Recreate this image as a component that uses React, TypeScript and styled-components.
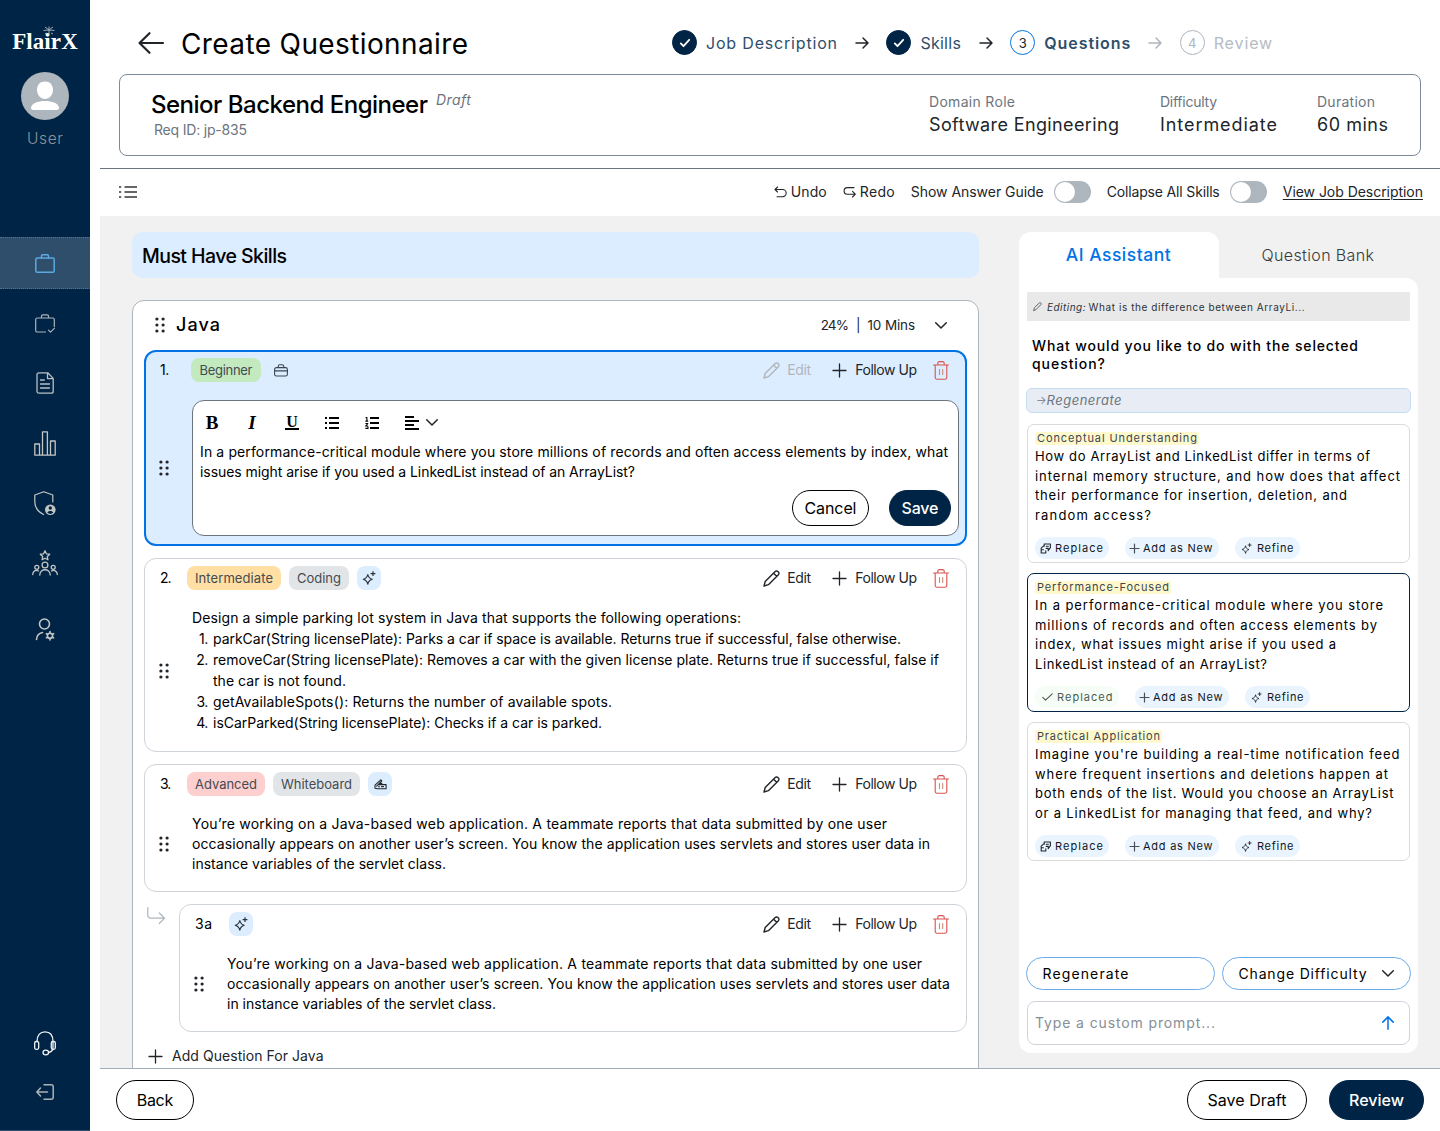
import React from "react";
import styled, { createGlobalStyle, css } from "styled-components";

const navy = "#002445";
const blue = "#0073e6";
const sky = "#dcedff";
const ink = "#212529";
const muted = "#6c757d";
const silver = "#adb5bd";

const GlobalStyle = createGlobalStyle`
  * { box-sizing: border-box; }
  body { margin: 0; background: #fff; font-family: Inter, "Open Sans", sans-serif; color: #000; }
  button { font-family: inherit; cursor: pointer; }
`;

/* ---------- text ---------- */

interface TextProps {
  $size?: number;
  $weight?: number;
  $track?: number;
  $color?: string;
  $line?: number;
  $italic?: boolean;
}

const Text = styled.span<TextProps>`
  display: block;
  flex: none;
  white-space: pre;
  font-size: ${(p) => p.$size ?? 14}px;
  font-weight: ${(p) => p.$weight ?? 400};
  letter-spacing: ${(p) => p.$track ?? 0}px;
  margin-right: ${(p) => -(p.$track ?? 0)}px;
  line-height: ${(p) => p.$line ?? 20}px;
  color: ${(p) => p.$color ?? "inherit"};
  font-style: ${(p) => (p.$italic ? "italic" : "normal")};
`;

/* ---------- icons ---------- */

interface IconProps {
  w: number;
  h: number;
  sw?: number;
  color?: string;
  children: React.ReactNode;
}

const Svg = styled.svg`
  display: block;
  flex: none;
  overflow: visible;
`;

const Icon = ({ w, h, sw = 1.2, color = "currentColor", children }: IconProps) => (
  <Svg
    width={w}
    height={h}
    viewBox={`0 0 ${w} ${h}`}
    fill="none"
    stroke={color}
    strokeWidth={sw}
    strokeLinecap="round"
    strokeLinejoin="round"
  >
    {children}
  </Svg>
);

const BackArrow = () => (
  <Icon w={26} h={22} sw={2.2} color={ink}>
    <path d="M25 11H1.5M11.5 1.2L1.5 11l10 9.8" />
  </Icon>
);
const StepArrow = ({ color }: { color: string }) => (
  <Icon w={14} h={12} sw={1.5} color={color}>
    <path d="M1 6h12M8 1l5 5-5 5" />
  </Icon>
);
const Check = ({ w = 10, sw = 1.8 }: { w?: number; sw?: number }) => (
  <Icon w={w} h={8} sw={sw}>
    <path d={`M.8 4.4l2.7 2.8L${w - 0.8} .8`} />
  </Icon>
);
const OutlineList = () => (
  <Icon w={18} h={12} sw={2} color="#666">
    <path d="M5.500 1H18M5.500 6H18M5.500 11H18M0 1h2.200M0 6h2.200M0 11h2.200" strokeLinecap="butt" />
  </Icon>
);
const Undo = () => (
  <Icon w={13} h={12} sw={1.1}>
    <path d="M3.6 1L1 3.5 3.6 6M1 3.5h7.6a3.6 3.6 0 0 1 0 7.2H3" />
  </Icon>
);
const Redo = () => (
  <Icon w={13} h={12} sw={1.1}>
    <path d="M11 1.6H4.400a3.300 3.300 0 0 0 0 6.600H12.300M9.500 5.400L12.300 8.200l-2.800 2.800" />
  </Icon>
);
const Chevron = () => (
  <Icon w={12} h={7} sw={1.5} color={ink}>
    <path d="M.7.7L6 6 11.3.7" />
  </Icon>
);
const Plus = ({ s = 13, sw = 1.3, color = ink }: { s?: number; sw?: number; color?: string }) => (
  <Icon w={s} h={s} sw={sw} color={color}>
    <path d={`M${s / 2} 0v${s}M0 ${s / 2}h${s}`} />
  </Icon>
);
const Pencil = () => (
  <Icon w={17} h={17} sw={1.4}>
    <path d="M1 16l1.200-4.500L12.200 1.500a1.900 1.900 0 0 1 2.700 0l.5.5a1.900 1.900 0 0 1 0 2.700L5.400 14.700zM10.600 3.200l3.100 3.100" />
  </Icon>
);
const TinyPencil = () => (
  <Icon w={9} h={9} sw={0.9} color="#555">
    <path d="M.7 8.3l.7-2.6L6.4.9c.9-.8 2.4.6 1.6 1.6L3.1 7.5z" />
  </Icon>
);
const Trash = () => (
  <Icon w={16} h={19} sw={1.1} color="#d9534f">
    <path d="M.5 4h15M2.2 4v12.600c0 1 .6 1.600 1.600 1.600h8.400c1 0 1.600-.6 1.600-1.600V4M4.800 4V2.200C4.800 1.200 5.400.6 6.400.6h3.200c1 0 1.600.6 1.600 1.600V4" />
    <path d="M6.500 8.500v5M9.700 8.500v5" stroke="#c58a78" />
  </Icon>
);
const Toolbox = () => (
  <Icon w={14} h={13} sw={1.1} color="#3c4650">
    <rect x=".6" y="3.600" width="12.800" height="8.400" rx="1.800" />
    <path d="M4.200 3.600V2.400A1.600 1.600 0 0 1 5.800.8h2.400a1.600 1.600 0 0 1 1.600 1.600v1.200M.6 6.900h12.800" />
  </Icon>
);
const Sparkle = ({ s = 14 }: { s?: number }) => (
  <Svg width={s} height={s} viewBox="0 0 14 14" fill="none" stroke="#2a323a" strokeWidth="1.2" strokeLinejoin="round">
    <path d="M5.800 3.500C6.300 6.400 7.100 7.300 10.200 8.300 7.100 9.300 6.300 10.200 5.800 13.200 5.200 10.200 4.400 9.300 1.300 8.300 4.400 7.300 5.200 6.400 5.800 3.500Z" />
    <path d="M11 .2v4.800M8.600 2.600h4.800" />
  </Svg>
);
const WritingHand = () => (
  <Icon w={13} h={11} sw={1.1} color="#20262c">
    <path d="M1 6.200L6.800.9l1 .9-3.600 3.800h7.900v4.200H3.400L1 9.300zM4.200 5.600L2.600 7.200M6.400 3.400l2.400 2.200M7.500 7.600h2M4.500 7.700h1" />
  </Icon>
);
const Swap = () => (
  <Icon w={11} h={11} sw={1.1} color="#20262c">
    <path d="M4.200 3.200V1h6.200v3.700L8.200 7.600V5.400H6.200M6.300 3.200H8.400M3.400 3.200L1.200 5.200v1.600h2.200M1.200 6.800v3.200h4.600V7.800M1.200 10h4.600" />
  </Icon>
);
const ReturnArrow = () => (
  <Icon w={19} h={18} sw={1.2} color={silver}>
    <path d="M.8.6v7.600a3 3 0 0 0 3 3H17.500M12.300 6l5.300 5.200-5.300 5.300" />
  </Icon>
);
const Drag = () => (
  <Svg width={10} height={16} viewBox="0 0 10 16" fill={ink}>
    {[2, 8, 14].map((y) => (
      <React.Fragment key={y}>
        <circle cx="1.900" cy={y} r="1.600" />
        <circle cx="8.100" cy={y} r="1.600" />
      </React.Fragment>
    ))}
  </Svg>
);
const Bullets = () => (
  <Icon w={14} h={12} sw={2} color="#000">
    <path d="M4 1h10M4 6h10M4 11h10M0 1h2M0 6h2M0 11h2" strokeLinecap="butt" />
  </Icon>
);
const Numbered = () => (
  <Icon w={14} h={12} sw={2} color="#000">
    <path d="M5 1h9M5 6h9M5 11h9" strokeLinecap="butt" />
    <path d="M.6.6h1.300v3.400M.4 4.100h2.800M.4 6.500h2.500L.6 9h2.500M.4 11.400h2.600V9.600" strokeWidth="1.1" strokeLinecap="butt" />
  </Icon>
);
const AlignLeft = () => (
  <Icon w={14} h={14} sw={2} color="#000">
    <path d="M0 1h9M0 5h14M0 9h9M0 13h14" strokeLinecap="butt" />
  </Icon>
);
const SendUp = () => (
  <Icon w={12} h={14} sw={1.5} color={blue}>
    <path d="M6 13.300V1M.8 6.100L6 .9l5.200 5.200" />
  </Icon>
);

const CaseIcon = () => (
  <Icon w={20} h={19} sw={1.5} color="#5aa9e0">
    <rect x=".8" y="4" width="18.400" height="14.200" rx="1.500" />
    <path d="M6.500 4V2c0-.7.500-1.200 1.200-1.200h4.600c.7 0 1.200.5 1.200 1.200v2" />
  </Icon>
);
const CaseCheckIcon = () => (
  <Icon w={20} h={19} sw={1.200} color="#a9b3bb">
    <path d="M10.500 18H2.200C1.300 18 .7 17.400.7 16.500v-11C.7 4.600 1.300 4 2.200 4h15.600c.9 0 1.500.6 1.500 1.500v7M6.500 4V2c0-.7.500-1.200 1.200-1.200h4.600c.7 0 1.200.5 1.200 1.200v2M13.500 16.200l2 2 4-4" />
  </Icon>
);
const DocIcon = () => (
  <Icon w={18} h={22} sw={1.300} color="#b9bfc2">
    <path d="M3 .8h8.800l5.400 5.600v12.800c0 1.100-.8 2-2 2H3c-1.200 0-2-.9-2-2V2.800c0-1.100.8-2 2-2zM11.500 1v5.600H17M4.500 8h3.800M4.500 12h9M4.500 16h9" />
  </Icon>
);
const ChartIcon = () => (
  <Icon w={22} h={25} sw={1.300} color="#c4c6c4">
    <path d="M.8 24.200V13h4.700v11.200M8.500 24.200V.8h4.900v23.400M16.500 24.200V10h4.700v14.200zM.8 24.200h20.400" />
  </Icon>
);
const ShieldIcon = () => (
  <Icon w={22} h={25} sw={1.200} color="#c4c6c4">
    <path d="M9.500 23.500C3.500 20.500.8 16.500.8 11V4L9.800.8 18.800 4v7" />
    <circle cx="16.300" cy="18.700" r="5.300" fill="#c4c6c4" stroke="none" />
    <circle cx="16.300" cy="17" r="1.700" fill={navy} stroke="none" />
    <path d="M13.300 21.600c.6-2.200 5.400-2.200 6 0-1.600 1.700-4.400 1.700-6 0z" fill={navy} stroke="none" />
  </Icon>
);
const TeamIcon = () => (
  <Icon w={26} h={26} sw={1.300} color="#c4c6c4">
    <path d="M13 .8l1.400 3 3.300.4-2.400 2.300.6 3.300-2.900-1.600-2.900 1.600.6-3.300-2.400-2.300 3.300-.4z" />
    <circle cx="13" cy="15" r="2.900" />
    <circle cx="4.800" cy="17.300" r="2" />
    <circle cx="21.200" cy="17.300" r="2" />
    <path d="M7.800 25c.2-7 10.200-7 10.400 0M.7 24.500c0-3.800 3.300-4.800 5.800-3.500M25.300 24.500c0-3.800-3.300-4.800-5.800-3.500" />
  </Icon>
);
const UserGearIcon = () => (
  <Icon w={20} h={23} sw={1.600} color="#c4c6c4">
    <circle cx="9.500" cy="6" r="5" />
    <path d="M1.500 21.500c.3-4 2.500-6.400 6-7" />
    <circle cx="15" cy="17.800" r="2.600" />
    <path d="M15 13.600v1.400M15 20.600V22M11.400 15.700l1.200.7M17.400 19.200l1.200.7M18.600 15.700l-1.200.7M12.600 19.200l-1.200.7" />
  </Icon>
);
const HeadsetIcon = () => (
  <Icon w={22} h={25} sw={1.300} color="#f1f3f5">
    <path d="M3 10.500C3 4.500 6 .8 11 .8s8 3.700 8 9.700v6c0 2.500-2 4.500-4.500 5" />
    <rect x=".7" y="10.500" width="4" height="7.800" rx="1.500" />
    <rect x="17.300" y="10.500" width="4" height="7.800" rx="1.500" />
    <ellipse cx="11.800" cy="21.500" rx="2.800" ry="2.300" />
  </Icon>
);
const ExitIcon = () => (
  <Icon w={18} h={16} sw={1.500} color="#aab3b5">
    <path d="M8 .8h7.200c1.200 0 2 .8 2 2v10.400c0 1.200-.8 2-2 2H8M11.500 8H1M4.500 4L.8 8l3.700 4" />
  </Icon>
);

/* ---------- sidebar ---------- */

const Page = styled.div`
  display: flex;
  width: 1440px;
  height: 1131px;
  overflow: hidden;
  background: #fff;
`;

const Sidebar = styled.aside`
  width: 90px;
  flex: none;
  display: flex;
  flex-direction: column;
  align-items: center;
  padding-top: 25px;
  background: ${navy};
  border-bottom: 1px solid #2f4e6b;
`;

const Logo = styled.div`
  position: relative;
  height: 47px;
  padding-top: 3px;
  font-family: "Liberation Serif", serif;
  font-size: 23px;
  font-weight: 700;
  letter-spacing: 0.1px;
  line-height: 28px;
  color: #fff;
`;

const Burst = styled.svg`
  position: absolute;
  left: 31px;
  top: 1px;
`;

const Avatar = styled.div`
  width: 48px;
  height: 48px;
  flex: none;
  border-radius: 50%;
  background: ${silver};
  overflow: hidden;
  margin-bottom: 9px;
`;

const Nav = styled.nav`
  width: 100%;
  margin-top: 84px;
  display: flex;
  flex-direction: column;
`;

const NavItem = styled.a<{ $active?: boolean; $drop?: number }>`
  height: ${(p) => (p.$active ? 52 : 60)}px;
  margin: ${(p) => (p.$active ? "4px 0" : `${p.$drop ?? 0}px 0 0`)};
  display: flex;
  align-items: center;
  justify-content: center;
  ${(p) =>
    p.$active &&
    css`
      background: #2f4e6b;
      border-top: 1px dotted #56708a;
      border-bottom: 1px dotted #56708a;
    `}
`;

const SidebarFoot = styled.div`
  margin-top: auto;
  padding-bottom: 30px;
  display: flex;
  flex-direction: column;
  align-items: center;
  gap: 28px;
`;

/* ---------- header ---------- */

const Main = styled.main`
  flex: 1;
  min-width: 0;
  padding-left: 10px;
  display: flex;
  flex-direction: column;
`;

const Header = styled.header`
  height: 169px;
  flex: none;
  padding: 12px 19px 0;
  border-bottom: 1px solid #6c757d;
`;

const TitleRow = styled.div`
  height: 62px;
  display: flex;
  align-items: center;
  padding: 0 0 1px 19px;
`;

const PageTitle = styled.div`
  width: 491px;
  margin-left: 17px;
  padding-top: 3px;
`;

const Stepper = styled.div`
  display: flex;
  align-items: center;
  gap: 17.7px;
`;

const Step = styled.div`
  display: flex;
  align-items: center;
  gap: 9px;
`;

const StepDot = styled.span<{ $state: "done" | "current" | "next" }>`
  width: 25px;
  height: 25px;
  border-radius: 50%;
  display: flex;
  align-items: center;
  justify-content: center;
  font-size: 13px;
  color: ${(p) => (p.$state === "done" ? "#fff" : p.$state === "current" ? ink : silver)};
  background: ${(p) => (p.$state === "done" ? navy : "#fff")};
  border: 1px solid ${(p) => (p.$state === "done" ? navy : p.$state === "current" ? blue : silver)};
`;

const JobCard = styled.section`
  height: 82px;
  border: 1px solid #7b8a9b;
  border-radius: 8px;
  display: flex;
  padding: 15px 32px 0 31px;
`;

const JobTitle = styled.div`
  flex: 1;
`;

const JobTitleRow = styled.div`
  display: flex;
  gap: 8px;
`;

const RequestId = styled.div`
  padding: 3px 0 0 3px;
`;

const Meta = styled.dl<{ $w: number }>`
  width: ${(p) => p.$w}px;
  margin: 2px 0 0;
`;

/* ---------- toolbar ---------- */

const Toolbar = styled.div`
  height: 47px;
  flex: none;
  padding: 0 17px 2px 19px;
  display: flex;
  align-items: center;
  justify-content: space-between;
`;

const Tools = styled.div`
  display: flex;
  align-items: center;
  gap: 16px;
`;

const Tool = styled.div<{ $gap: number }>`
  display: flex;
  align-items: center;
  gap: ${(p) => p.$gap}px;
  color: ${ink};
`;

const Switch = styled.span`
  width: 37px;
  height: 22px;
  border-radius: 11px;
  background: ${silver};
  padding: 1px;
  &::before {
    content: "";
    display: block;
    width: 20px;
    height: 20px;
    border-radius: 50%;
    background: #fff;
  }
`;

const JobLink = styled.a`
  text-decoration: underline;
  text-underline-offset: 2px;
  text-decoration-thickness: 1px;
  color: ${ink};
`;

/* ---------- workspace ---------- */

const Workspace = styled.div`
  flex: 1;
  min-height: 0;
  overflow: hidden;
  background: #f1f1f1;
  padding: 16px 22px 0 32px;
  display: flex;
  gap: 40px;
`;

const Questions = styled.section`
  width: 847px;
  flex: none;
`;

const Banner = styled.div`
  height: 46px;
  border-radius: 10px;
  background: ${sky};
  padding: 1px 10px 0;
  display: flex;
  align-items: center;
  margin-bottom: 22px;
`;

const SkillCard = styled.div`
  height: 800px;
  background: #fff;
  border: 1px solid ${silver};
  border-radius: 12px;
  padding: 0 11px;
`;

const SkillHead = styled.div`
  height: 49px;
  padding: 0 20px 1px 11px;
  display: flex;
  align-items: center;
`;

const SkillName = styled.div`
  flex: 1;
  padding: 0 0 1px 11px;
`;

const SkillStats = styled.div`
  margin-right: 20px;
  padding-bottom: 1px;
  display: flex;
  gap: 7px;
  color: ${ink};
`;

const Card = styled.article<{ $h: number; $active?: boolean; $indent?: number }>`
  height: ${(p) => p.$h}px;
  margin: 0 0 12px ${(p) => p.$indent ?? 0}px;
  border-radius: 12px;
  border: ${(p) => (p.$active ? `2px solid ${blue}` : "1px solid #ced4da")};
  background: ${(p) => (p.$active ? sky : "#fff")};
  padding: ${(p) => (p.$active ? "0 6px 8px 14px" : "1px 15px 0 15px")};
  display: flex;
  flex-direction: column;
`;

const CardHead = styled.div`
  height: 36px;
  flex: none;
  display: flex;
  align-items: center;
`;

const CardNumber = styled.div<{ $w: number }>`
  width: ${(p) => p.$w}px;
`;

const Chips = styled.div`
  flex: 1;
  display: flex;
  align-items: center;
  gap: 8px;
`;

const Chip = styled.span<{ $bg: string; $w: number }>`
  width: ${(p) => p.$w}px;
  height: 24px;
  border-radius: 8px;
  background: ${(p) => p.$bg};
  display: flex;
  align-items: center;
  justify-content: center;
  color: #434b52;
`;

const Actions = styled.div<{ $inset: number }>`
  display: flex;
  align-items: center;
  margin-right: ${(p) => p.$inset}px;
`;

const EditAction = styled.span<{ $off?: boolean }>`
  display: flex;
  align-items: center;
  gap: 7px;
  margin-right: 22px;
  color: ${(p) => (p.$off ? "#b0b6bc" : ink)};
`;

const FollowAction = styled.span`
  display: flex;
  align-items: center;
  gap: 9px;
  margin-right: 16px;
  color: ${ink};
`;

const CardBody = styled.div<{ $top: number }>`
  flex: 1;
  display: flex;
  padding-top: ${(p) => p.$top}px;
`;

const Handle = styled.div<{ $top: number }>`
  width: 33px;
  padding-top: ${(p) => p.$top}px;
  margin-left: -1px;
  flex: none;
`;

const Lines = styled.div`
  flex: 1;
`;

const StepList = styled.ol`
  list-style: none;
  margin: 0;
  padding: 0;
`;

const StepItem = styled.li`
  display: flex;
  gap: 5px;
`;

const Marker = styled.span`
  width: 16px;
  text-align: right;
  font-size: 14px;
  letter-spacing: -0.4px;
  line-height: 21px;
`;

const Editor = styled.div`
  flex: 1;
  height: 136px;
  border: 1px solid ${muted};
  border-radius: 12px;
  background: #fff;
  padding: 0 7px;
  display: flex;
  flex-direction: column;
`;

const FormatBar = styled.div`
  height: 41px;
  flex: none;
  display: flex;
  align-items: center;
  padding-top: 2px;
`;

const FormatSlot = styled.span`
  width: 40px;
  padding-left: 5px;
  display: flex;
  align-items: center;
  gap: 7px;
`;

const FormatLetter = styled.span<{ $italic?: boolean; $under?: boolean }>`
  font-family: "Liberation Serif", serif;
  font-weight: 700;
  font-size: ${(p) => (p.$under ? 16 : 19)}px;
  line-height: ${(p) => (p.$under ? 12 : 18)}px;
  width: 14px;
  text-align: center;
  font-style: ${(p) => (p.$italic ? "italic" : "normal")};
  border-bottom: ${(p) => (p.$under ? "2px solid #000" : "none")};
`;

const EditorFoot = styled.div`
  display: flex;
  justify-content: flex-end;
  gap: 20px;
  padding-top: 8px;
`;

const Button = styled.button<{ $w: number; $h: number; $primary?: boolean }>`
  width: ${(p) => p.$w}px;
  height: ${(p) => p.$h}px;
  padding: 0;
  border-radius: ${(p) => p.$h / 2}px;
  border: 1px solid ${(p) => (p.$primary ? navy : "#000")};
  background: ${(p) => (p.$primary ? navy : "#fff")};
  color: ${(p) => (p.$primary ? "#fff" : "#000")};
  display: flex;
  align-items: center;
  justify-content: center;
`;

const FollowUpRow = styled.div`
  display: flex;
`;

const Branch = styled.div`
  width: 35px;
  padding: 3px 0 0 3px;
`;

const FollowUpCard = styled(Card)`
  flex: 1;
`;

const AddRow = styled.div`
  display: flex;
  align-items: center;
  gap: 10px;
  height: 24px;
  padding-left: 5px;
  color: ${ink};
`;

/* ---------- assistant ---------- */

const Assistant = styled.aside`
  width: 399px;
  flex: none;
`;

const Tabs = styled.div`
  display: flex;
  height: 46px;
`;

const Tab = styled.div<{ $active?: boolean }>`
  flex: 1;
  padding-right: 1px;
  display: flex;
  align-items: center;
  justify-content: center;
  border-radius: 12px 12px 0 0;
  background: ${(p) => (p.$active ? "#fff" : "transparent")};
  color: ${(p) => (p.$active ? blue : "#343a40")};
`;

const Panel = styled.div`
  height: 775px;
  background: #fff;
  border-radius: 0 12px 12px 12px;
  padding: 14px 8px 8px;
  display: flex;
  flex-direction: column;
`;

const EditingBar = styled.div`
  height: 29px;
  background: #e9e9e9;
  border-radius: 1px;
  padding: 0 6px;
  display: flex;
  align-items: center;
  color: #2c3238;
`;

const EditingLabel = styled.div`
  margin: 0 3px 0 5px;
`;

const Prompt = styled.div`
  padding: 16px 5px 15px;
`;

const Choice = styled.div`
  height: 25px;
  margin: 0 -1px 11px;
  padding: 0 0 1px 9px;
  border: 1px solid #c5dcf5;
  border-radius: 6px;
  background: #e8ecf4;
  display: flex;
  align-items: center;
  color: ${muted};
`;

const Suggestion = styled.article<{ $selected?: boolean }>`
  height: 139px;
  margin-bottom: 10px;
  border: 1px solid ${(p) => (p.$selected ? navy : "#d8dadc")};
  border-radius: 7px;
  padding: 7px 7px 0;
`;

const Tag = styled.div`
  width: fit-content;
  background: #fdf9cd;
  border-radius: 2px;
  padding: 0 2px;
  color: #3d4650;
`;

const SuggestionText = styled.div`
  padding-top: 2px;
  height: 82px;
`;

const SuggestionActions = styled.div`
  display: flex;
  gap: 16px;
  margin-top: 10px;
`;

const MiniButton = styled.span<{ $w: number; $pad: number; $gap: number; $done?: boolean }>`
  width: ${(p) => p.$w}px;
  height: 22px;
  border-radius: 11px;
  background: ${(p) => (p.$done ? "#f5fdf6" : "#e9f4ff")};
  color: ${(p) => (p.$done ? "#4b5a52" : "#10161c")};
  padding-left: ${(p) => p.$pad}px;
  display: flex;
  align-items: center;
  gap: ${(p) => p.$gap}px;
`;

const Pills = styled.div`
  display: flex;
  gap: 7px;
  margin: auto -1px 11px;
`;

const Pill = styled.div`
  flex: 1;
  height: 33px;
  border: 1px solid #6aabee;
  border-radius: 17px;
  padding: 0 16px 0 15.5px;
  display: flex;
  align-items: center;
  justify-content: space-between;
`;

const PromptInput = styled.div`
  height: 44px;
  border: 1px solid #ced4da;
  border-radius: 8px;
  padding: 0 15px 0 7px;
  display: flex;
  align-items: center;
  justify-content: space-between;
  color: #868e96;
`;

/* ---------- footer ---------- */

const Footer = styled.footer`
  height: 63px;
  flex: none;
  border-top: 1px solid #a3adb9;
  padding: 11px 16px 0;
  display: flex;
`;

const FooterRight = styled.div`
  margin-left: auto;
  display: flex;
  gap: 22px;
`;

/* ---------- composed parts ---------- */

type TrackedLine = [text: string, track: number];

const CardActions = ({ off, inset }: { off?: boolean; inset: number }) => (
  <Actions $inset={inset}>
    <EditAction $off={off}>
      <Pencil />
      <Text $track={-0.32}>Edit</Text>
    </EditAction>
    <FollowAction>
      <Plus />
      <Text $track={-0.45}>Follow Up</Text>
    </FollowAction>
    <Trash />
  </Actions>
);

const TrackedLines = ({ lines, size = 14, line = 20 }: { lines: TrackedLine[]; size?: number; line?: number }) => (
  <>
    {lines.map(([t, k]) => (
      <Text key={t} $size={size} $track={k} $line={line}>
        {t}
      </Text>
    ))}
  </>
);

interface SuggestionData {
  tag: TrackedLine;
  lines: TrackedLine[];
  replaced?: boolean;
}

const suggestions: SuggestionData[] = [
  {
    tag: ["Conceptual Understanding", 0.897],
    lines: [
      ["How do ArrayList and LinkedList differ in terms of", 0.636],
      ["internal memory structure, and how does that affect", 0.924],
      ["their performance for insertion, deletion, and", 0.819],
      ["random access?", 1.171],
    ],
  },
  {
    tag: ["Performance-Focused", 0.843],
    lines: [
      ["In a performance-critical module where you store", 0.934],
      ["millions of records and often access elements by", 0.885],
      ["index, what issues might arise if you used a", 0.782],
      ["LinkedList instead of an ArrayList?", 0.621],
    ],
    replaced: true,
  },
  {
    tag: ["Practical Application", 0.823],
    lines: [
      ["Imagine you're building a real-time notification feed", 0.923],
      ["where frequent insertions and deletions happen at", 0.914],
      ["both ends of the list. Would you choose an ArrayList", 0.747],
      ["or a LinkedList for managing that feed, and why?", 0.813],
    ],
  },
];

const SuggestionCard = ({ tag, lines, replaced }: SuggestionData) => (
  <Suggestion $selected={replaced}>
    <Tag>
      <Text $size={11} $track={tag[1]} $line={13}>
        {tag[0]}
      </Text>
    </Tag>
    <SuggestionText>
      <TrackedLines lines={lines} size={13} line={19.5} />
    </SuggestionText>
    <SuggestionActions>
      {replaced ? (
        <MiniButton $w={84} $pad={7} $gap={4} $done>
          <Check w={11} sw={1.1} />
          <Text $size={11} $track={1.022}>Replaced</Text>
        </MiniButton>
      ) : (
        <MiniButton $w={74} $pad={5} $gap={4}>
          <Swap />
          <Text $size={11} $track={1.065}>Replace</Text>
        </MiniButton>
      )}
      <MiniButton $w={94} $pad={5} $gap={4}>
        <Plus s={9} sw={1.2} color="#495057" />
        <Text $size={11} $track={0.752}>Add as New</Text>
      </MiniButton>
      <MiniButton $w={65} $pad={6} $gap={5}>
        <Sparkle s={11} />
        <Text $size={11} $track={0.703}>Refine</Text>
      </MiniButton>
    </SuggestionActions>
  </Suggestion>
);

const parkingSteps: TrackedLine[][] = [
  [["parkCar(String licensePlate): Parks a car if space is available. Returns true if successful, false otherwise.", -0.033]],
  [
    ["removeCar(String licensePlate): Removes a car with the given license plate. Returns true if successful, false if", 0.018],
    ["the car is not found.", 0.03],
  ],
  [["getAvailableSpots(): Returns the number of available spots.", 0.141]],
  [["isCarParked(String licensePlate): Checks if a car is parked.", -0.012]],
];

export default function App() {
  return (
    <Page>
      <GlobalStyle />
      <Sidebar>
        <Logo>
          FlairX
          <Burst width="12" height="9" viewBox="0 0 12 9" stroke="#c9cdd0" strokeWidth=".8" fill="none">
            <path d="M6 9V4M6 4L2 1M6 4l4-3M6 4L.5 4.500M6 4l5.500.5M6 3V.5M4 7L2 8M8 7l2 1" />
          </Burst>
        </Logo>
        <Avatar>
          <svg width="48" height="48" viewBox="0 0 48 48" fill="#fff">
            <path d="M24 9.500c5 0 8 3.500 8 8.300S28.800 27 24 27s-8-4.400-8-9.200 3-8.300 8-8.300z" />
            <path d="M10 36c0-9.500 28-9.500 28 0 0 1.300-.9 2-2.200 2H12.200C10.900 38 10 37.300 10 36z" />
          </svg>
        </Avatar>
        <Text $size={15.5} $weight={300} $track={0.6} $color="#8d9499">User</Text>
        <Nav>
          <NavItem $active><CaseIcon /></NavItem>
          <NavItem><CaseCheckIcon /></NavItem>
          <NavItem><DocIcon /></NavItem>
          <NavItem><ChartIcon /></NavItem>
          <NavItem><ShieldIcon /></NavItem>
          <NavItem><TeamIcon /></NavItem>
          <NavItem $drop={6}><UserGearIcon /></NavItem>
        </Nav>
        <SidebarFoot>
          <HeadsetIcon />
          <ExitIcon />
        </SidebarFoot>
      </Sidebar>

      <Main>
        <Header>
          <TitleRow>
            <BackArrow />
            <PageTitle>
              <Text $size={28} $track={0.382} $line={34}>Create Questionnaire</Text>
            </PageTitle>
            <Stepper>
              <Step>
                <StepDot $state="done"><Check /></StepDot>
                <Text $size={16} $track={0.815} $color="#2f4e6b">Job Description</Text>
              </Step>
              <StepArrow color={ink} />
              <Step>
                <StepDot $state="done"><Check /></StepDot>
                <Text $size={16} $track={0.275} $color="#2f4e6b">Skills</Text>
              </Step>
              <StepArrow color={ink} />
              <Step>
                <StepDot $state="current">3</StepDot>
                <Text $size={16} $weight={600} $track={0.928} $color="#2f4e6b">Questions</Text>
              </Step>
              <StepArrow color={silver} />
              <Step>
                <StepDot $state="next">4</StepDot>
                <Text $size={16} $track={0.884} $color="#b6bcc2">Review</Text>
              </Step>
            </Stepper>
          </TitleRow>
          <JobCard>
            <JobTitle>
              <JobTitleRow>
                <Text $size={24} $weight={500} $track={-0.496} $line={30}>Senior Backend Engineer</Text>
                <Text $italic $track={0.45} $color={muted}>Draft</Text>
              </JobTitleRow>
              <RequestId>
                <Text $track={-0.196} $color={muted} $line={14}>Req ID: jp-835</Text>
              </RequestId>
            </JobTitle>
            <Meta $w={231}>
              <Text $track={0.302} $color={muted} $line={19}>Domain Role</Text>
              <Text $size={18} $track={0.369} $color={ink} $line={28}>Software Engineering</Text>
            </Meta>
            <Meta $w={157}>
              <Text $track={-0.255} $color={muted} $line={19}>Difficulty</Text>
              <Text $size={18} $track={0.936} $color={ink} $line={28}>Intermediate</Text>
            </Meta>
            <Meta $w={71}>
              <Text $track={0.263} $color={muted} $line={19}>Duration</Text>
              <Text $size={18} $track={0.526} $color={ink} $line={28}>60 mins</Text>
            </Meta>
          </JobCard>
        </Header>

        <Toolbar>
          <OutlineList />
          <Tools>
            <Tool $gap={4}><Undo /><Text $track={0.115}>Undo</Text></Tool>
            <Tool $gap={4}><Redo /><Text $track={0.354}>Redo</Text></Tool>
            <Tool $gap={10}><Text $track={-0.034}>Show Answer Guide</Text><Switch /></Tool>
            <Tool $gap={10}><Text $track={-0.163}>Collapse All Skills</Text><Switch /></Tool>
            <JobLink><Text $track={-0.04}>View Job Description</Text></JobLink>
          </Tools>
        </Toolbar>

        <Workspace>
          <Questions>
            <Banner>
              <Text $size={19.5} $weight={500} $track={-0.56} $line={26}>Must Have Skills</Text>
            </Banner>
            <SkillCard>
              <SkillHead>
                <Drag />
                <SkillName>
                  <Text $size={18} $weight={500} $track={1.083}>Java</Text>
                </SkillName>
                <SkillStats>
                  <Text $size={13.5} $track={-0.8}>24%</Text>
                  <Text $size={13.5}>|</Text>
                  <Text $size={13.5} $track={-0.15}>10 Mins</Text>
                </SkillStats>
                <Chevron />
              </SkillHead>

              <Card $h={196} $active>
                <CardHead>
                  <CardNumber $w={31}><Text $track={-0.5}>1.</Text></CardNumber>
                  <Chips>
                    <Chip $bg="#c3eabf" $w={70}><Text $size={13} $track={-0.292}>Beginner</Text></Chip>
                    <Chip $bg="transparent" $w={24}><Toolbox /></Chip>
                  </Chips>
                  <CardActions off inset={10} />
                </CardHead>
                <CardBody $top={12}>
                  <Handle $top={60}><Drag /></Handle>
                  <Editor>
                    <FormatBar>
                      <FormatSlot><FormatLetter>B</FormatLetter></FormatSlot>
                      <FormatSlot><FormatLetter $italic>I</FormatLetter></FormatSlot>
                      <FormatSlot><FormatLetter $under>U</FormatLetter></FormatSlot>
                      <FormatSlot><Bullets /></FormatSlot>
                      <FormatSlot><Numbered /></FormatSlot>
                      <FormatSlot><AlignLeft /><Chevron /></FormatSlot>
                    </FormatBar>
                    <TrackedLines
                      lines={[
                        ["In a performance-critical module where you store millions of records and often access elements by index, what", 0.123],
                        ["issues might arise if you used a LinkedList instead of an ArrayList?", -0.062],
                      ]}
                    />
                    <EditorFoot>
                      <Button $w={77} $h={36}><Text $size={16} $track={-0.094}>Cancel</Text></Button>
                      <Button $w={62} $h={36} $primary><Text $size={16} $weight={500} $track={-0.156}>Save</Text></Button>
                    </EditorFoot>
                  </Editor>
                </CardBody>
              </Card>

              <Card $h={194}>
                <CardHead>
                  <CardNumber $w={27}><Text $track={-1}>2.</Text></CardNumber>
                  <Chips>
                    <Chip $bg="#ffdfa3" $w={94}><Text $size={13} $track={0.085}>Intermediate</Text></Chip>
                    <Chip $bg="#e2e5e8" $w={60}><Text $size={13} $track={-0.013}>Coding</Text></Chip>
                    <Chip $bg={sky} $w={24}><Sparkle /></Chip>
                  </Chips>
                  <CardActions inset={2} />
                </CardHead>
                <CardBody $top={11}>
                  <Handle $top={56}><Drag /></Handle>
                  <Lines>
                    <TrackedLines lines={[["Design a simple parking lot system in Java that supports the following operations:", 0.111]]} line={21} />
                    <StepList>
                      {parkingSteps.map((lines, i) => (
                        <StepItem key={i}>
                          <Marker>{i + 1}.</Marker>
                          <div><TrackedLines lines={lines} line={21} /></div>
                        </StepItem>
                      ))}
                    </StepList>
                  </Lines>
                </CardBody>
              </Card>

              <Card $h={128}>
                <CardHead>
                  <CardNumber $w={27}><Text $track={-1}>3.</Text></CardNumber>
                  <Chips>
                    <Chip $bg="#fdcfcf" $w={78}><Text $size={13} $track={-0.027}>Advanced</Text></Chip>
                    <Chip $bg="#e2e5e8" $w={87}><Text $size={13} $track={-0.019}>Whiteboard</Text></Chip>
                    <Chip $bg={sky} $w={24}><WritingHand /></Chip>
                  </Chips>
                  <CardActions inset={2} />
                </CardHead>
                <CardBody $top={12}>
                  <Handle $top={22}><Drag /></Handle>
                  <Lines>
                    <TrackedLines
                      lines={[
                        ["You’re working on a Java-based web application. A teammate reports that data submitted by one user", 0.22],
                        ["occasionally appears on another user’s screen. You know the application uses servlets and stores user data in", 0.093],
                        ["instance variables of the servlet class.", 0.016],
                      ]}
                    />
                  </Lines>
                </CardBody>
              </Card>

              <FollowUpRow>
                <Branch><ReturnArrow /></Branch>
                <FollowUpCard $h={128}>
                  <CardHead>
                    <CardNumber $w={34}><Text $track={0.484}>3a</Text></CardNumber>
                    <Chips>
                      <Chip $bg={sky} $w={24}><Sparkle /></Chip>
                    </Chips>
                    <CardActions inset={2} />
                  </CardHead>
                  <CardBody $top={12}>
                    <Handle $top={22}><Drag /></Handle>
                    <Lines>
                      <TrackedLines
                        lines={[
                          ["You’re working on a Java-based web application. A teammate reports that data submitted by one user", 0.22],
                          ["occasionally appears on another user’s screen. You know the application uses servlets and stores user data", 0.101],
                          ["in instance variables of the servlet class.", 0.001],
                        ]}
                      />
                    </Lines>
                  </CardBody>
                </FollowUpCard>
              </FollowUpRow>

              <AddRow>
                <Plus />
                <Text $track={0.051}>Add Question For Java</Text>
              </AddRow>
            </SkillCard>
          </Questions>

          <Assistant>
            <Tabs>
              <Tab $active><Text $size={17.5} $weight={500} $track={0.51}>AI Assistant</Text></Tab>
              <Tab><Text $size={16} $weight={300} $track={0.35}>Question Bank</Text></Tab>
            </Tabs>
            <Panel>
              <EditingBar>
                <TinyPencil />
                <EditingLabel><Text $size={10} $italic $track={0.475}>Editing:</Text></EditingLabel>
                <Text $size={10} $track={0.58}>What is the difference between ArrayLi...</Text>
              </EditingBar>
              <Prompt>
                <Text $weight={500} $track={0.858} $line={18}>What would you like to do with the selected</Text>
                <Text $weight={500} $track={0.949} $line={18}>question?</Text>
              </Prompt>
              <Choice>
                <Text $size={11} $weight={300}>→</Text>
                <Text $size={13} $italic $track={0.503}>Regenerate</Text>
              </Choice>
              {suggestions.map((s) => (
                <SuggestionCard key={s.tag[0]} {...s} />
              ))}
              <Pills>
                <Pill><Text $track={1.123}>Regenerate</Text></Pill>
                <Pill><Text $track={0.836}>Change Difficulty</Text><Chevron /></Pill>
              </Pills>
              <PromptInput>
                <Text $track={0.876}>Type a custom prompt...</Text>
                <SendUp />
              </PromptInput>
            </Panel>
          </Assistant>
        </Workspace>

        <Footer>
          <Button $w={78} $h={40}><Text $size={16} $track={-0.3}>Back</Text></Button>
          <FooterRight>
            <Button $w={120} $h={40}><Text $size={16} $track={0.035}>Save Draft</Text></Button>
            <Button $w={95} $h={40} $primary><Text $size={16} $weight={500} $track={0.025}>Review</Text></Button>
          </FooterRight>
        </Footer>
      </Main>
    </Page>
  );
}
